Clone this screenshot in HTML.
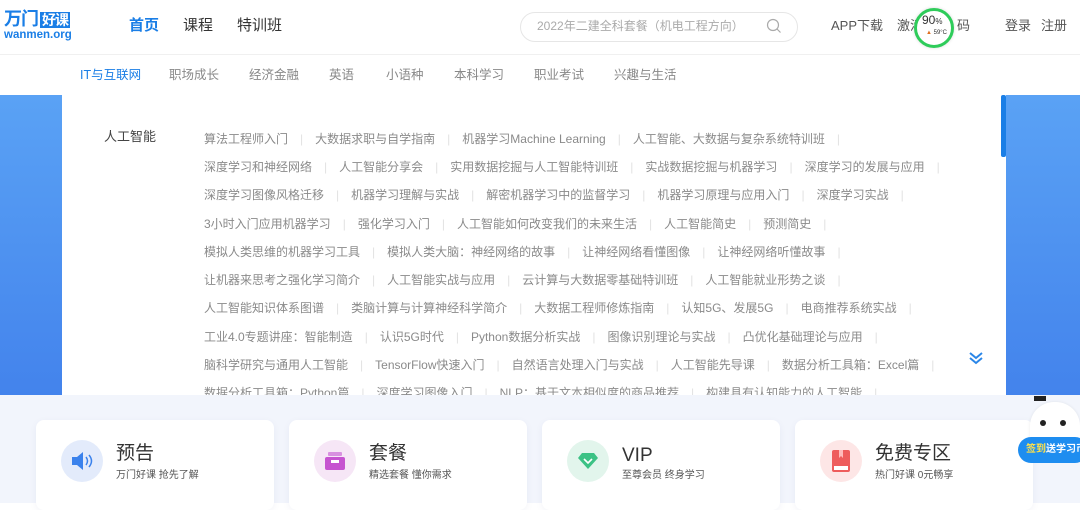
<!DOCTYPE html>
<html><head><meta charset="utf-8"><style>
*{margin:0;padding:0;box-sizing:border-box}
body{width:1080px;height:503px;overflow:hidden;position:relative;background:#fff;font-family:"Liberation Sans","Noto Sans CJK SC",sans-serif}
.a{position:absolute;white-space:nowrap;line-height:1.2}
.hdr{height:55px;border-bottom:1px solid #f0f0f0}
.row{position:absolute;left:204px;display:flex;font-size:12px;color:#8a8a8a;white-space:nowrap;height:16px;line-height:16px}
.row span.s{color:#e2e2e2;margin:0 12px}
.card{position:absolute;top:420px;width:238px;height:90px;background:#fff;border-radius:8px;box-shadow:0 2px 8px rgba(0,40,120,.05)}
.ic{position:absolute;left:25px;top:20px;width:42px;height:42px;border-radius:50%}
.t{position:absolute;left:80px;top:22px;font-size:19px;color:#333;line-height:24px}
.st{position:absolute;left:80px;top:50px;font-size:10px;color:#555;line-height:12px}
</style></head><body>
<div class="hdr"></div>
<div class="a" style="left:4px;top:8px;font-size:18px;font-weight:bold;color:#1a7ee6;letter-spacing:-1px;line-height:22px">万门<span style="background:#1a7ee6;color:#fff;padding:0 2px;font-size:14px;margin-left:2px">好课</span></div>
<div class="a" style="left:4px;top:29px;font-size:11.5px;font-weight:bold;color:#1a7ee6;line-height:13px">wanmen.org</div>
<div class="a" style="left:129px;top:17px;font-size:15px;font-weight:bold;color:#1a7ee6">首页</div>
<div class="a" style="left:183px;top:17px;font-size:15px;color:#333">课程</div>
<div class="a" style="left:237px;top:17px;font-size:15px;color:#333">特训班</div>
<div class="a" style="left:520px;top:12px;width:278px;height:30px;border:1px solid #e6e6e6;border-radius:15px"></div>
<div class="a" style="left:537px;top:19px;font-size:12px;color:#aaa">2022年二建全科套餐（机电工程方向）</div>
<svg class="a" style="left:766px;top:18px" width="16" height="16"><circle cx="7" cy="7" r="5.5" fill="none" stroke="#aaa" stroke-width="1.2"/><path d="M11 11l3.5 3.5" stroke="#aaa" stroke-width="1.2"/></svg>
<div class="a" style="left:831px;top:18px;font-size:13px;color:#555">APP下载</div>
<div class="a" style="left:897px;top:18px;font-size:13px;color:#555">激活码</div>
<div class="a" style="left:957px;top:18px;font-size:13px;color:#555">码</div>
<div class="a" style="left:914px;top:8px;width:40px;height:40px;border-radius:50%;border:3px solid #2ecc5a;background:#fff;box-shadow:0 0 3px rgba(0,0,0,.15)"></div>
<div class="a" style="left:922px;top:13px;font-size:12px;color:#333">90<span style="font-size:8px">%</span></div>
<div class="a" style="left:926px;top:30px;font-size:6px;color:#e07020">▲ <span style="color:#333">59°C</span></div>
<div class="a" style="left:1005px;top:18px;font-size:13px;color:#555">登录</div>
<div class="a" style="left:1041px;top:18px;font-size:13px;color:#555">注册</div>

<div class="a" style="left:80px;top:68px;font-size:12.5px;color:#1a7ee6">IT与互联网</div>
<div class="a" style="left:169px;top:68px;font-size:12.5px;color:#888">职场成长</div>
<div class="a" style="left:249px;top:68px;font-size:12.5px;color:#888">经济金融</div>
<div class="a" style="left:329px;top:68px;font-size:12.5px;color:#888">英语</div>
<div class="a" style="left:386px;top:68px;font-size:12.5px;color:#888">小语种</div>
<div class="a" style="left:454px;top:68px;font-size:12.5px;color:#888">本科学习</div>
<div class="a" style="left:534px;top:68px;font-size:12.5px;color:#888">职业考试</div>
<div class="a" style="left:614px;top:68px;font-size:12.5px;color:#888">兴趣与生活</div>

<div class="a" style="left:0;top:95px;width:1080px;height:300px;background:linear-gradient(180deg,#5aa2f5,#4383ec)"></div>
<div class="a" style="left:62px;top:95px;width:944px;height:300px;background:#fff;overflow:hidden">
<div class="a" style="left:42px;top:34px;font-size:13px;color:#444">人工智能</div>
<div class="row" style="top:36px;left:142px"><span>算法工程师入门</span><span class="s">|</span><span>大数据求职与自学指南</span><span class="s">|</span><span>机器学习Machine Learning</span><span class="s">|</span><span>人工智能、大数据与复杂系统特训班</span><span class="s">|</span></div>
<div class="row" style="top:64px;left:142px"><span>深度学习和神经网络</span><span class="s">|</span><span>人工智能分享会</span><span class="s">|</span><span>实用数据挖掘与人工智能特训班</span><span class="s">|</span><span>实战数据挖掘与机器学习</span><span class="s">|</span><span>深度学习的发展与应用</span><span class="s">|</span></div>
<div class="row" style="top:92px;left:142px"><span>深度学习图像风格迁移</span><span class="s">|</span><span>机器学习理解与实战</span><span class="s">|</span><span>解密机器学习中的监督学习</span><span class="s">|</span><span>机器学习原理与应用入门</span><span class="s">|</span><span>深度学习实战</span><span class="s">|</span></div>
<div class="row" style="top:121px;left:142px"><span>3小时入门应用机器学习</span><span class="s">|</span><span>强化学习入门</span><span class="s">|</span><span>人工智能如何改变我们的未来生活</span><span class="s">|</span><span>人工智能简史</span><span class="s">|</span><span>预测简史</span><span class="s">|</span></div>
<div class="row" style="top:149px;left:142px"><span>模拟人类思维的机器学习工具</span><span class="s">|</span><span>模拟人类大脑：神经网络的故事</span><span class="s">|</span><span>让神经网络看懂图像</span><span class="s">|</span><span>让神经网络听懂故事</span><span class="s">|</span></div>
<div class="row" style="top:177px;left:142px"><span>让机器来思考之强化学习简介</span><span class="s">|</span><span>人工智能实战与应用</span><span class="s">|</span><span>云计算与大数据零基础特训班</span><span class="s">|</span><span>人工智能就业形势之谈</span><span class="s">|</span></div>
<div class="row" style="top:205px;left:142px"><span>人工智能知识体系图谱</span><span class="s">|</span><span>类脑计算与计算神经科学简介</span><span class="s">|</span><span>大数据工程师修炼指南</span><span class="s">|</span><span>认知5G、发展5G</span><span class="s">|</span><span>电商推荐系统实战</span><span class="s">|</span></div>
<div class="row" style="top:234px;left:142px"><span>工业4.0专题讲座：智能制造</span><span class="s">|</span><span>认识5G时代</span><span class="s">|</span><span>Python数据分析实战</span><span class="s">|</span><span>图像识别理论与实战</span><span class="s">|</span><span>凸优化基础理论与应用</span><span class="s">|</span></div>
<div class="row" style="top:262px;left:142px"><span>脑科学研究与通用人工智能</span><span class="s">|</span><span>TensorFlow快速入门</span><span class="s">|</span><span>自然语言处理入门与实战</span><span class="s">|</span><span>人工智能先导课</span><span class="s">|</span><span>数据分析工具箱：Excel篇</span><span class="s">|</span></div>
<div class="row" style="top:290px;left:142px"><span>数据分析工具箱：Python篇</span><span class="s">|</span><span>深度学习图像入门</span><span class="s">|</span><span>NLP：基于文本相似度的商品推荐</span><span class="s">|</span><span>构建具有认知能力的人工智能</span><span class="s">|</span></div>
<div class="a" style="left:939px;top:0;width:5px;height:62px;background:#1a7ee6;border-radius:2px"></div>
<svg class="a" style="left:906px;top:256px" width="16" height="14"><path d="M2 2l6 5 6-5M2 7l6 5 6-5" fill="none" stroke="#2a86e8" stroke-width="2"/></svg>
</div>

<div class="a" style="left:0;top:395px;width:1080px;height:108px;background:#f2f5fc"></div>
<div class="card" style="left:36px"><div class="ic" style="background:#e3ebfb"></div><svg class="a" style="left:35px;top:31px" width="24" height="20"><path d="M1 6h5l6-5v18l-6-5H1z" fill="#3b82ec"/><path d="M15 6q3 4 0 8M18 4q5 6 0 12" fill="none" stroke="#3b82ec" stroke-width="1.5"/></svg><div class="t">预告</div><div class="st">万门好课 抢先了解</div></div>
<div class="card" style="left:289px"><div class="ic" style="background:#f6e6f6"></div><svg class="a" style="left:36px;top:32px" width="20" height="18"><rect x="3" y="0" width="14" height="4" rx="1" fill="#d890e0"/><rect x="0" y="5" width="20" height="13" rx="2" fill="#c653d0"/><rect x="6" y="8" width="8" height="3" fill="#fff"/></svg><div class="t">套餐</div><div class="st">精选套餐 懂你需求</div></div>
<div class="card" style="left:542px"><div class="ic" style="background:#e2f5ec"></div><svg class="a" style="left:36px;top:33px" width="20" height="16"><path d="M4 0h12l4 5-10 11L0 5z" fill="#3cc285"/><path d="M6 6l4 4 4-4" fill="none" stroke="#fff" stroke-width="1.6"/></svg><div class="t" style="top:24px">VIP</div><div class="st">至尊会员 终身学习</div></div>
<div class="card" style="left:795px"><div class="ic" style="background:#fde6e6"></div><svg class="a" style="left:37px;top:30px" width="18" height="22"><rect x="0" y="0" width="18" height="22" rx="2" fill="#ee5c5c"/><rect x="2" y="16" width="14" height="4" fill="#fff"/><path d="M7 0v8l2-2 2 2V0" fill="#fbb"/></svg><div class="t">免费专区</div><div class="st">热门好课 0元畅享</div></div>

<div class="a" style="left:1030px;top:402px;width:50px;height:46px;background:#fff;border-radius:24px 24px 4px 4px;box-shadow:0 0 3px rgba(0,0,0,.08)"></div>
<div class="a" style="left:1034px;top:396px;width:12px;height:5px;background:#222"></div>
<div class="a" style="left:1040px;top:420px;width:6px;height:6px;border-radius:50%;background:#222"></div>
<div class="a" style="left:1060px;top:420px;width:6px;height:6px;border-radius:50%;background:#222"></div>
<div class="a" style="left:1018px;top:437px;width:70px;height:26px;background:#1e8df0;border-radius:13px;color:#fff;font-size:10px;line-height:26px;padding-left:8px;font-weight:bold"><span style="color:#ffe14a">签到</span>送学习币</div>
</body></html>
